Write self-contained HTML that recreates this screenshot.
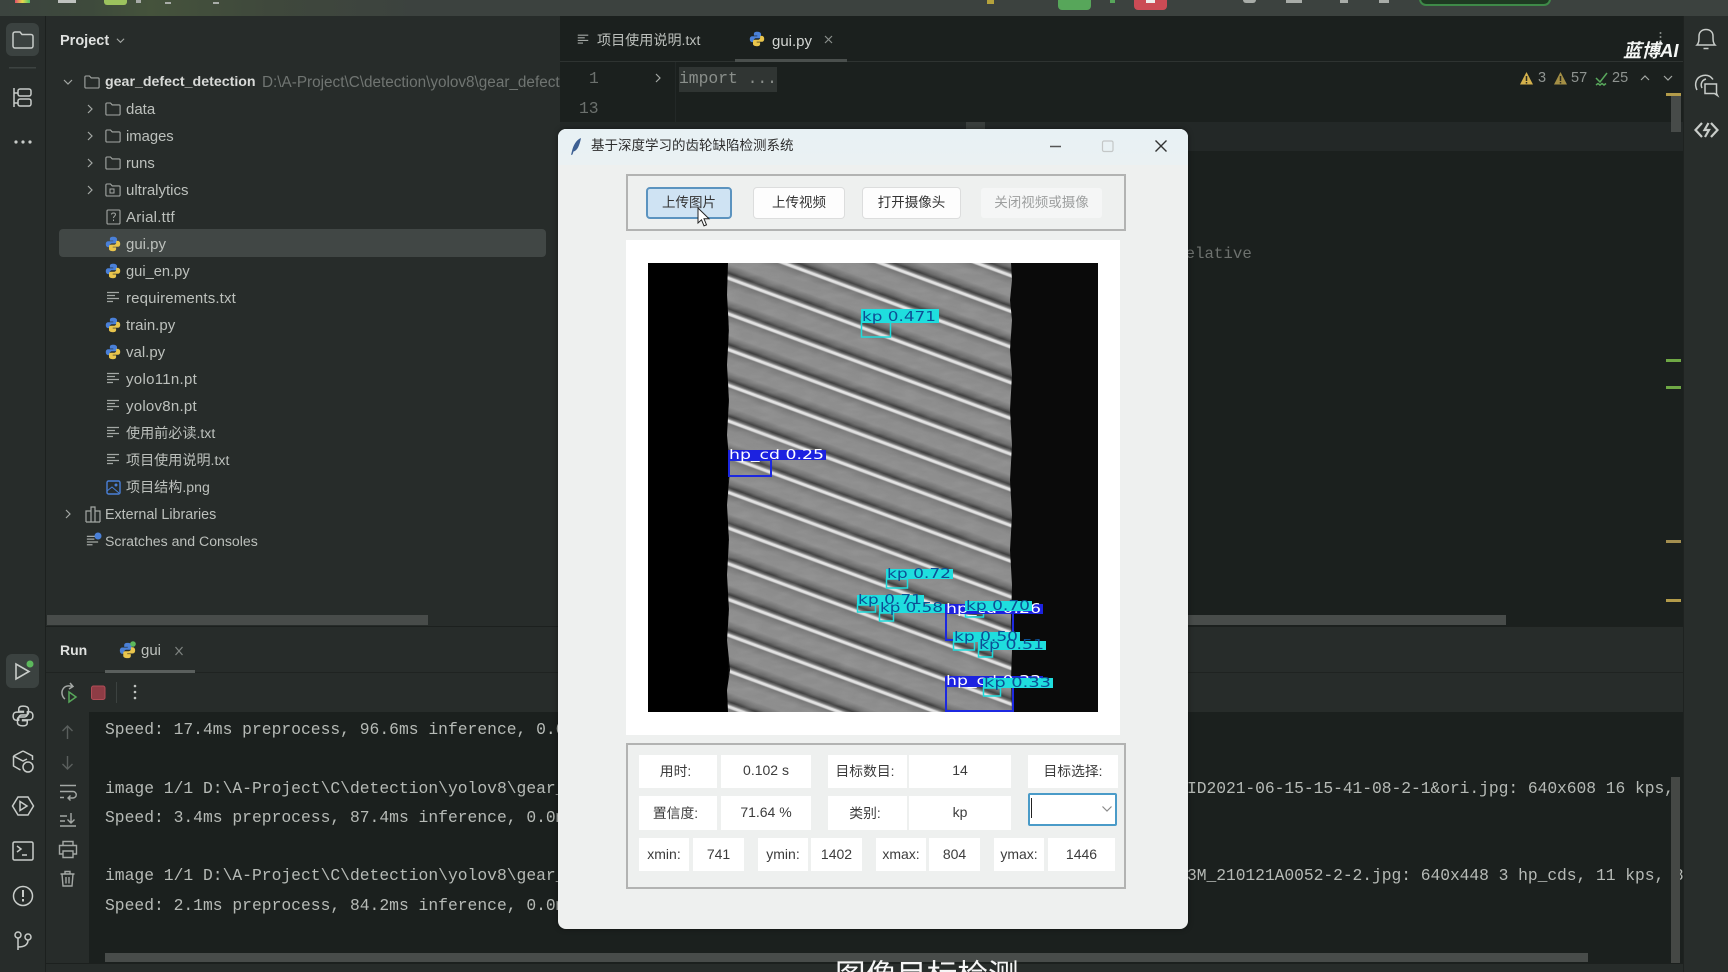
<!DOCTYPE html>
<html lang="zh">
<head>
<meta charset="utf-8">
<title>gear_defect_detection</title>
<style>
html,body{margin:0;padding:0;width:1728px;height:972px;overflow:hidden;background:#1b201e}
body{position:relative;font-family:"Liberation Sans","Noto Sans CJK SC",sans-serif;color:#bcc0bc;filter:blur(.35px)}
.a{position:absolute}
.topbar{left:0;top:0;width:1728px;height:16px;background:linear-gradient(90deg,#3c443f 0,#3e4a3c 90px,#45533c 150px,#3f483c 270px,#3c423f 420px,#3c423f 100%)}
.lt{left:0;top:16px;width:45px;height:956px;background:#272c2a;border-right:1px solid #1c201e}
.pp{left:46px;top:16px;width:514px;height:610px;background:#272c2a}
.r{position:absolute;height:27px;line-height:27px;font-size:15px;color:#bcc0bc;white-space:nowrap}
.cj{font-size:14.1px}
.sel{left:59px;top:229px;width:487px;height:28px;background:#414745;border-radius:4px}
.sb{background:#484c4a}
.rp{left:46px;top:626px;width:1637px;height:86px;background:#272c2a;border-top:1px solid #1c201e;box-sizing:border-box}
.gut{left:46px;top:712px;width:43px;height:251px;background:#272c2a}
.con{left:89px;top:712px;width:1594px;height:251px;background:#1b201e;overflow:hidden}
.m{position:absolute;font-family:"Liberation Mono",monospace;font-size:16.33px;line-height:20px;color:#b6bab6;white-space:pre}
.rs{left:1683px;top:16px;width:45px;height:956px;background:#282d2b;border-left:1px solid #1e2220;box-sizing:border-box}
.dlg{left:558px;top:129px;width:630px;height:800px;background:#eef0ef;border-radius:8px;overflow:hidden;box-shadow:0 0 6px rgba(0,0,0,.4)}
.tb{position:absolute;left:0;top:0;width:630px;height:36px;background:linear-gradient(180deg,#e8f1f4,#eaf1f3)}
.t{position:absolute;font-size:13.5px;color:#2c2c2c;white-space:nowrap}
.btn{position:absolute;box-sizing:border-box;display:flex;align-items:center;justify-content:center;font-size:13.5px;color:#333;background:#fdfdfd;border-radius:3px;box-shadow:0 0 0 1px #dcdddd;padding-bottom:4px}
.c{position:absolute;box-sizing:border-box;background:#fff;display:flex;align-items:center;justify-content:center;font-size:14px;color:#3c3c3c;white-space:nowrap;padding-bottom:2px}
.l{font-size:13.8px;padding-right:5px}
.g{position:absolute;box-sizing:border-box;border:2px solid #b2b3b2}
</style>
</head>
<body>

<svg width="0" height="0" style="position:absolute">
<defs>
<symbol id="py" viewBox="0 0 16 16">
<path fill="#4a80d8" d="M8 .8C5.4.8 4.9 1.9 4.9 3v1.600h3.400v.6H3.200C1.700 5.200.8 6.300.8 8.100s.9 3 2.400 3h1.600V9.400c0-1.200 1-2.100 2.100-2.100h3.400c1 0 1.700-.8 1.700-1.700V3C11.900 1.800 10.600.8 8 .8z"/>
<path fill="#e9c54c" d="M8 15.200c2.600 0 3.100-1.100 3.100-2.200v-1.600H7.700v-.6h5.100c1.500 0 2.400-1.100 2.400-2.900s-.9-3-2.400-3h-1.600v1.700c0 1.200-1 2.100-2.100 2.100H5.700C4.700 8.700 4 9.500 4 10.400V13c0 1.200 1.400 2.200 4 2.200z"/>
</symbol>
<symbol id="fd" viewBox="0 0 16 16"><path fill="none" stroke="#a4a8a5" stroke-width="1.100" d="M.9 3a1 1 0 0 1 1-1h3.600l1.700 1.900h6.900a1 1 0 0 1 1 1V13a1 1 0 0 1-1 1H1.900a1 1 0 0 1-1-1z"/></symbol>
<symbol id="tx" viewBox="0 0 16 16"><path fill="none" stroke="#a4a8a5" stroke-width="1.300" d="M2 2.500h12M2 5.500h8M2 8.500h12M2 11.500h6"/></symbol>
<symbol id="cr" viewBox="0 0 10 10"><path fill="none" stroke="#a4a8a5" stroke-width="1.200" d="M3 1l4 4-4 4"/></symbol>
<symbol id="cd" viewBox="0 0 10 10"><path fill="none" stroke="#a4a8a5" stroke-width="1.200" d="M1 3l4 4 4-4"/></symbol>
<pattern id="teeth" patternUnits="userSpaceOnUse" width="100" height="33.48" patternTransform="translate(728 277) rotate(20.3)">
<rect width="100" height="33.48" fill="url(#tg)"/>
</pattern>
<linearGradient id="tg" x1="0" y1="0" x2="0" y2="1">
<stop offset="0" stop-color="#e6e6e6"/>
<stop offset=".06" stop-color="#e2e2e2"/>
<stop offset=".1" stop-color="#777"/>
<stop offset=".3" stop-color="#8c8c8c"/>
<stop offset=".62" stop-color="#8e8e8e"/>
<stop offset=".8" stop-color="#6a6a6a"/>
<stop offset=".89" stop-color="#3e3e3e"/>
<stop offset=".95" stop-color="#6e6e6e"/>
<stop offset="1" stop-color="#cfcfcf"/>
</linearGradient>
<filter id="nz" x="0" y="0" width="100%" height="100%">
<feTurbulence type="fractalNoise" baseFrequency=".05 .16" numOctaves="2" seed="4"/>
<feColorMatrix type="matrix" values="0 0 0 0 .5 0 0 0 0 .5 0 0 0 0 .5 1.600 0 0 0 -.55"/>
<feComposite in2="SourceGraphic" operator="in"/>
</filter>
</defs>
</svg>

<!-- top bar -->
<div class="a topbar"></div>
<div class="a" style="left:15px;top:0;width:15px;height:3px;background:linear-gradient(90deg,#e24f6c,#e8d84a,#4ac36b)"></div>
<div class="a" style="left:58px;top:0;width:18px;height:3px;background:#bfc2bf"></div>
<div class="a" style="left:104px;top:0;width:23px;height:5px;background:#9cc25e;border-radius:0 0 3px 3px"></div>
<div class="a" style="left:136px;top:0;width:5px;height:3px;background:#a8aca8"></div>
<div class="a" style="left:165px;top:2px;width:6px;height:2px;background:#a8aca8"></div>
<div class="a" style="left:213px;top:2px;width:6px;height:2px;background:#a8aca8"></div>
<div class="a" style="left:987px;top:0;width:7px;height:4px;background:#b5a23c"></div>
<div class="a" style="left:1058px;top:0;width:33px;height:10px;background:#57a65a;border-radius:0 0 4px 4px"></div>
<div class="a" style="left:1110px;top:0;width:5px;height:3px;background:#57a65a"></div>
<div class="a" style="left:1134px;top:0;width:33px;height:10px;background:#cb4b55;border-radius:0 0 4px 4px"></div>
<div class="a" style="left:1146px;top:0;width:9px;height:3px;background:#eee"></div>
<div class="a" style="left:1243px;top:0;width:13px;height:3px;background:#a8aca8;border-radius:0 0 6px 6px"></div>
<div class="a" style="left:1286px;top:0;width:16px;height:3px;background:#a8aca8"></div>
<div class="a" style="left:1340px;top:0;width:8px;height:3px;background:#a8aca8"></div>
<div class="a" style="left:1379px;top:0;width:10px;height:3px;background:#a8aca8"></div>
<div class="a" style="left:1419px;top:-8px;width:132px;height:14px;box-sizing:border-box;background:#1e3a22;border:2px solid #3e8a48;border-radius:8px"></div>

<!-- left toolbar + panels -->
<div class="a lt"></div>
<div class="a pp"></div>
<div class="a sel"></div>

<div class="r" style="left:60px;top:28px;font-weight:bold;font-size:14.5px;color:#dfe1df">Project</div>
<div class="r" style="left:105px;top:69px;font-weight:bold;font-size:14.2px;color:#d8dad8">gear_defect_detection</div>
<div class="r" style="left:262px;top:69px;color:#707572;font-size:15.3px">D:\A-Project\C\detection\yolov8\gear_defect</div>
<div class="r" style="left:126px;top:96px">data</div>
<div class="r" style="left:126px;top:124px;font-size:14.8px">images</div>
<div class="r" style="left:126px;top:151px;font-size:14.8px">runs</div>
<div class="r" style="left:126px;top:177px">ultralytics</div>
<div class="r" style="left:126px;top:204px;letter-spacing:.25px">Arial.ttf</div>
<div class="r" style="left:126px;top:231px">gui.py</div>
<div class="r" style="left:126px;top:259px;font-size:14.7px">gui_en.py</div>
<div class="r" style="left:126px;top:285px;letter-spacing:.15px">requirements.txt</div>
<div class="r" style="left:126px;top:312px">train.py</div>
<div class="r" style="left:126px;top:339px">val.py</div>
<div class="r" style="left:126px;top:366px;letter-spacing:.3px">yolo11n.pt</div>
<div class="r" style="left:126px;top:393px;letter-spacing:.25px">yolov8n.pt</div>
<div class="r cj" style="left:126px;top:420px">使用前必读.txt</div>
<div class="r cj" style="left:126px;top:447px">项目使用说明.txt</div>
<div class="r cj" style="left:126px;top:474px">项目结构.png</div>
<div class="r" style="left:105px;top:502px;font-size:14.3px">External Libraries</div>
<div class="r" style="left:105px;top:528px;font-size:14.1px">Scratches and Consoles</div>

<div class="a sb" style="left:47px;top:615px;width:381px;height:10px"></div>

<!-- editor -->
<div class="a" style="left:560px;top:61px;width:1123px;height:1px;background:#2e3331"></div>
<div class="a" style="left:560px;top:122px;width:1123px;height:29px;background:#232827"></div>
<div class="a" style="left:966px;top:122px;width:19px;height:7px;background:#3a3f3d"></div>
<div class="a" style="left:675px;top:62px;width:1px;height:553px;background:#232827"></div>
<div class="r" style="left:597px;top:27px;font-size:14.1px">项目使用说明.txt</div>
<div class="r" style="left:772px;top:28px;font-size:15px;color:#d2d5d2">gui.py</div>
<div class="a" style="left:735px;top:59px;width:112px;height:3px;background:#4a4f4d"></div>
<div class="a" style="left:679px;top:67px;width:98px;height:25px;background:#303533"></div>
<div class="m" style="left:679px;top:69px;color:#8a8f8b">import ...</div>
<div class="m" style="left:589px;top:69px;color:#6b706d">1</div>
<div class="m" style="left:579px;top:99px;color:#6b706d">13</div>
<div class="m" style="left:1176px;top:244px;color:#6d716e;font-size:15.8px">relative</div>

<div class="r" style="left:1538px;top:65px;font-size:14.5px;color:#8f9491">3</div>
<div class="r" style="left:1571px;top:65px;font-size:14.5px;color:#8f9491">57</div>
<div class="r" style="left:1612px;top:65px;font-size:14.5px;color:#8f9491">25</div>

<div class="a" style="left:1671px;top:95px;width:10px;height:37px;background:#474b49"></div>
<div class="a" style="left:1666px;top:93px;width:15px;height:3px;background:#b39b4a"></div>
<div class="a" style="left:1666px;top:359px;width:15px;height:3px;background:#6fa845"></div>
<div class="a" style="left:1666px;top:386px;width:15px;height:3px;background:#6fa845"></div>
<div class="a" style="left:1666px;top:540px;width:15px;height:3px;background:#a48f50"></div>
<div class="a" style="left:1666px;top:599px;width:15px;height:3px;background:#b39b4a"></div>
<div class="a sb" style="left:1100px;top:615px;width:406px;height:10px"></div>

<!-- run panel -->
<div class="a rp"></div>
<div class="a" style="left:46px;top:672px;width:1637px;height:1px;background:#1f2321"></div>
<div class="r" style="left:60px;top:637px;font-weight:bold;font-size:14px;color:#dfe1df">Run</div>
<div class="r" style="left:141px;top:637px">gui</div>
<div class="a" style="left:105px;top:670px;width:90px;height:3px;background:#5a5f5d"></div>
<div class="a gut"></div>
<div class="a con">
<div class="m" style="left:16px;top:8px">Speed: 17.4ms preprocess, 96.6ms inference, 0.0ms postprocess</div>
<div class="m" style="left:16px;top:67px">image 1/1 D:\A-Project\C\detection\yolov8\gear_defect</div>
<div class="m" style="left:16px;top:96px">Speed: 3.4ms preprocess, 87.4ms inference, 0.0ms postprocess</div>
<div class="m" style="left:16px;top:154px">image 1/1 D:\A-Project\C\detection\yolov8\gear_defect</div>
<div class="m" style="left:16px;top:184px">Speed: 2.1ms preprocess, 84.2ms inference, 0.0ms postprocess</div>
<div class="m" style="left:1098px;top:67px;letter-spacing:-.06px">ID2021-06-15-15-41-08-2-1&amp;ori.jpg: 640x608 16 kps,</div>
<div class="m" style="left:1098px;top:154px;letter-spacing:-.06px">3M_210121A0052-2-2.jpg: 640x448 3 hp_cds, 11 kps, 8</div>
</div>
<div class="a" style="left:1671px;top:777px;width:9px;height:186px;background:#454845"></div>
<div class="a sb" style="left:105px;top:953px;width:1483px;height:9px"></div>
<div class="a" style="left:46px;top:963px;width:1637px;height:9px;background:#272c2a;border-top:1px solid #1c201e;box-sizing:border-box"></div>
<div class="a rs"></div>

<!-- IDE icons -->
<svg class="a" style="left:0;top:0" width="1728" height="972" viewBox="0 0 1728 972">
<rect x="6" y="23" width="33" height="33" rx="6" fill="#3b4240"/>
<path fill="none" stroke="#c8ccc9" stroke-width="1.500" d="M13 34a2 2 0 0 1 2-2h5l2 2.500h9a2 2 0 0 1 2 2V46a2 2 0 0 1-2 2H15a2 2 0 0 1-2-2z"/>
<rect x="9" y="67" width="27" height="1.500" fill="#3d4341"/>
<path fill="none" stroke="#c8ccc9" stroke-width="1.500" d="M14 88v19M14 93h4M14 103h4"/><rect x="18" y="89" width="13" height="7" rx="2" fill="none" stroke="#c8ccc9" stroke-width="1.500"/><rect x="18" y="99" width="13" height="7" rx="2" fill="none" stroke="#c8ccc9" stroke-width="1.500"/>
<circle cx="16" cy="142" r="1.600" fill="#c8ccc9"/><circle cx="23" cy="142" r="1.600" fill="#c8ccc9"/><circle cx="30" cy="142" r="1.600" fill="#c8ccc9"/>
<rect x="6" y="654" width="33" height="34" rx="6" fill="#3b4240"/>
<path fill="none" stroke="#c8ccc9" stroke-width="1.600" d="M16 664v15l13-7.500z"/><circle cx="30" cy="664" r="3.500" fill="#5cb85c"/>
<g transform="translate(12 705) scale(1.375)" fill="none" stroke="#c8ccc9" stroke-width="1.100">
<path d="M8 .8C5.400.8 4.900 1.900 4.900 3v1.600h3.400v.6H3.200C1.700 5.200.8 6.300.8 8.100s.9 3 2.400 3h1.600V9.400c0-1.200 1-2.100 2.100-2.100h3.400c1 0 1.700-.8 1.700-1.700V3C11.900 1.800 10.600.8 8 .8z"/>
<path d="M8 15.200c2.600 0 3.100-1.100 3.100-2.200v-1.600H7.700v-.6h5.100c1.500 0 2.400-1.100 2.400-2.900s-.9-3-2.400-3h-1.600v1.700c0 1.200-1 2.100-2.100 2.100H5.700C4.700 8.700 4 9.500 4 10.400V13c0 1.200 1.400 2.200 4 2.200z"/>
</g>
<path fill="none" stroke="#c8ccc9" stroke-width="1.500" d="M23 751l9.500 5v4M13.500 756l9.500-5M13.500 756v10l7 4M13.500 756l9.500 5 4-2"/><circle cx="28" cy="767" r="5" fill="none" stroke="#c8ccc9" stroke-width="1.500"/>
<path fill="none" stroke="#c8ccc9" stroke-width="1.500" d="M18 797h10l5.500 9-5.500 9H18l-5.500-9z"/><path fill="none" stroke="#c8ccc9" stroke-width="1.500" d="M20 801.500v9l7-4.500z"/>
<rect x="13" y="842" width="20" height="18" rx="1.500" fill="none" stroke="#c8ccc9" stroke-width="1.500"/><path fill="none" stroke="#c8ccc9" stroke-width="1.500" d="M17 846l4 3-4 3M22 855h5"/>
<circle cx="23" cy="896" r="9.500" fill="none" stroke="#c8ccc9" stroke-width="1.500"/><path stroke="#c8ccc9" stroke-width="2" d="M23 890v7M23 899v2.500"/>
<circle cx="18" cy="935" r="3" fill="none" stroke="#c8ccc9" stroke-width="1.500"/><circle cx="28" cy="937" r="3" fill="none" stroke="#c8ccc9" stroke-width="1.500"/><path fill="none" stroke="#c8ccc9" stroke-width="1.500" d="M18 938v12M18 947c6 0 10-2 10-7"/>

<use href="#cd" x="63" y="77" width="10" height="10"/>
<use href="#cr" x="85" y="104" width="10" height="10"/>
<use href="#cr" x="85" y="131" width="10" height="10"/>
<use href="#cr" x="85" y="158" width="10" height="10"/>
<use href="#cr" x="85" y="185" width="10" height="10"/>
<use href="#cr" x="63" y="509" width="10" height="10"/>
<use href="#cd" x="116" y="36" width="9" height="9"/>
<use href="#fd" x="84" y="74" width="16" height="16"/>
<use href="#fd" x="105" y="101" width="16" height="16"/>
<use href="#fd" x="105" y="128" width="16" height="16"/>
<use href="#fd" x="105" y="155" width="16" height="16"/>
<use href="#fd" x="105" y="182" width="16" height="16"/>
<rect x="110" y="189" width="4" height="4" fill="none" stroke="#a4a8a5"/>
<rect x="107" y="210" width="13" height="14" rx="1" fill="none" stroke="#a4a8a5" stroke-width="1.100"/>
<path fill="none" stroke="#a4a8a5" d="M111.500 214.500c0-2 4-2 4 0 0 1.500-2 1.500-2 3.500M113.500 219.500v1.500"/>
<use href="#py" x="105" y="236" width="16" height="16"/>
<use href="#py" x="105" y="263" width="16" height="16"/>
<use href="#tx" x="105" y="290" width="16" height="16"/>
<use href="#py" x="105" y="317" width="16" height="16"/>
<use href="#py" x="105" y="344" width="16" height="16"/>
<use href="#tx" x="105" y="371" width="16" height="16"/>
<use href="#tx" x="105" y="398" width="16" height="16"/>
<use href="#tx" x="105" y="425" width="16" height="16"/>
<use href="#tx" x="105" y="452" width="16" height="16"/>
<rect x="107" y="481" width="13" height="13" rx="1.500" fill="none" stroke="#4a80d8" stroke-width="1.400"/><path fill="none" stroke="#4a80d8" d="M107 491l5-4 7 6"/><circle cx="116" cy="485" r="1.500" fill="#4a80d8"/>
<path fill="none" stroke="#a4a8a5" stroke-width="1.200" d="M86 522v-11h5v11M91 522v-15h4v15M95 522v-11h5v11M86 522h14"/>
<use href="#tx" x="85" y="534" width="15" height="15"/><circle cx="98" cy="536" r="3.500" fill="#4a80d8"/>

<use href="#tx" x="576" y="33" width="14" height="14"/>
<use href="#py" x="749" y="31" width="16" height="16"/>
<path stroke="#8a8f8c" stroke-width="1.200" d="M825 36l7 7M832 36l-7 7"/>
<use href="#cr" x="653" y="73" width="10" height="10"/>

<!-- inspection -->
<path fill="#d4b14c" d="M1526.500 72l6.500 12.500h-13z"/><path stroke="#2a2a20" stroke-width="1.500" d="M1526.500 76v5M1526.500 82v1.500"/>
<path fill="#a48f45" d="M1560.500 72l6.500 12.500h-13z"/><path stroke="#2a2a20" stroke-width="1.500" d="M1560.500 76v5M1560.500 82v1.500"/>
<path fill="none" stroke="#59a85c" stroke-width="1.500" d="M1596 78l4 4 7-9M1596 85l2-1.500 2 1.500 2-1.500 2 1.500 2-1.500"/>
<use href="#cd" x="1640" y="73" width="10" height="10" transform="rotate(180 1645 78)"/>
<use href="#cd" x="1663" y="73" width="10" height="10"/>
<circle cx="1660.500" cy="33" r="1" fill="#8a8f8c"/><circle cx="1660.500" cy="37" r="1" fill="#8a8f8c"/><circle cx="1660.500" cy="41" r="1" fill="#8a8f8c"/>

<!-- right toolbar -->
<path fill="none" stroke="#c8ccc9" stroke-width="1.500" d="M1697 45c2-2 2-5 2-9 0-4 3-6.500 7-6.500s7 2.500 7 6.500c0 4 0 7 2 9zM1703.500 48.500h5"/>
<path fill="none" stroke="#c8ccc9" stroke-width="1.500" d="M1697 90c-3-6-1-13 6-14.500 5-1 8 1 10 4M1702 88c-2-4 0-8 4-9M1705 84h11.500v9.500l1 2-3-2H1705z"/>
<path fill="none" stroke="#c8ccc9" stroke-width="2.200" d="M1702 123l-6.500 7 6.500 7M1711 123l6.500 7-6.500 7M1708.500 123l-4 7h4.500l-4 7"/>

<!-- run toolbar -->
<use href="#py" x="119" y="642" width="17" height="17"/><circle cx="133" cy="644" r="2.800" fill="#5cb85c"/>
<path stroke="#7f8481" stroke-width="1.200" d="M175.500 647l7 8M182.500 647l-7 8"/>
<path fill="none" stroke="#a4a8a5" stroke-width="1.500" d="M73 687c-3-2-8-1.500-10 2-2 3-1 8 2 10M70 683l3 3.500-4 2.500"/><path fill="none" stroke="#57a65a" stroke-width="1.500" d="M69 692v10l7-5z"/>
<rect x="91.500" y="686" width="13.500" height="13.500" rx="2" fill="#8e3c45" stroke="#b14d57" stroke-width="1"/>
<rect x="116" y="682" width="1" height="21" fill="#3c4240"/>
<circle cx="135" cy="686" r="1.300" fill="#c0c4c1"/><circle cx="135" cy="692" r="1.300" fill="#c0c4c1"/><circle cx="135" cy="698" r="1.300" fill="#c0c4c1"/>

<path fill="none" stroke="#5a5f5d" stroke-width="1.400" d="M67.500 739v-13M62.500 731l5-5 5 5M67.500 756v13M62.500 764l5 5 5-5"/>
<path fill="none" stroke="#a4a8a5" stroke-width="1.400" d="M60 785.500h16M60 791.500h13a3 3 0 0 1 0 6.500h-5M70.500 795.500l-2.500 2.500 2.500 2.500M60 797.500h4"/>
<path fill="none" stroke="#a4a8a5" stroke-width="1.400" d="M60 816h7M60 821h5M60 826h16M71 813v10M67.500 819.500l3.500 3.500 3.500-3.500"/>
<path fill="none" stroke="#a4a8a5" stroke-width="1.400" d="M63 846v-4.500h10v4.500M63 854h-3.500v-8.500h17v8.500H73M63 851h10v6.500H63z"/>
<path fill="none" stroke="#a4a8a5" stroke-width="1.400" d="M60.500 874h14M65 874v-2.500h5v2.500M62 874l1 12h9l1-12M66 877v6.500M69 877v6.500"/>
</svg>

<div class="a" style="left:1623px;top:38px;font-size:18.5px;font-style:italic;font-weight:bold;color:#f4f6f4;white-space:nowrap;line-height:26px;font-family:'Liberation Sans','Noto Sans CJK SC',sans-serif">蓝博AI</div>

<!-- subtitle -->
<div class="a" style="left:835px;top:958px;font-size:30.6px;line-height:36px;color:#f6f6f6;white-space:nowrap;font-family:'Liberation Sans','Noto Sans CJK SC',sans-serif">图像目标检测</div>

<!-- dialog -->
<div class="a dlg">
<div class="tb"></div>
<svg class="a" style="left:0;top:0" width="630" height="40" viewBox="558 129 630 40">
<path fill="#3d5f92" d="M581 138c-5 2-8 8-9 13l-1 4 1.500-.5 1-3c4-1 6-6 7.500-13.500z"/>
<path stroke="#555" stroke-width="1.600" d="M1050 146.500h11"/>
<rect x="1102.500" y="141" width="10.500" height="10.500" rx="1.500" fill="none" stroke="#c4c7c7" stroke-width="1.200"/>
<path stroke="#333" stroke-width="1.400" d="M1155.500 140.500l11 11M1166.500 140.500l-11 11"/>
</svg>
<div class="t" style="left:33px;top:8px;line-height:18px">基于深度学习的齿轮缺陷检测系统</div>

<div class="g" style="left:68px;top:45px;width:500px;height:57px"></div>
<div class="btn" style="left:88px;top:58px;width:86px;height:32px;background:#cfe3f3;box-shadow:none;border:2px solid #5b93bf;border-radius:4px">上传图片</div>
<div class="btn" style="left:196px;top:59px;width:90px;height:30px">上传视频</div>
<div class="btn" style="left:305px;top:59px;width:97px;height:30px">打开摄像头</div>
<div class="btn" style="left:423px;top:59px;width:121px;height:30px;background:#f5f6f6;box-shadow:none;color:#9d9f9f">关闭视频或摄像</div>

<div class="a" style="left:68px;top:111px;width:494px;height:495px;background:#fff"></div>

<svg class="a" style="left:90px;top:134px" width="450" height="449" viewBox="648 263 450 449" font-family="'DejaVu Sans',sans-serif" font-size="13">
<rect x="648" y="263" width="450" height="449" fill="#000"/>
<rect x="1010" y="263" width="88" height="449" fill="#0a0a0a"/>
<path fill="url(#teeth)" d="M728 263L1011 263 1012 280 1010 300 1012 320 1010 350 1012 375 1010 410 1012 445 1010 480 1012 515 1010 550 1012 585 1011 620 1012 650 1011 680 1012 712H728L727 690 730 670 727 640 729 610 727 575 729 540 727 505 730 470 727 435 729 400 727 365 729 330 727 295z"/>
<path fill="#808080" filter="url(#nz)" opacity=".18" d="M728 263H1010V712H728z"/>
<g fill="none" stroke="#1ddcdc" stroke-width="1.500">
<rect x="861.500" y="319" width="29" height="18"/>
<rect x="886.500" y="579" width="21" height="9"/>
<rect x="857.500" y="605" width="18" height="7"/>
<rect x="879.500" y="613" width="14" height="8"/>
<rect x="965.500" y="611" width="18" height="6"/>
<rect x="953.500" y="642" width="21" height="8"/>
<rect x="978.500" y="650" width="14" height="7"/>
<rect x="983.500" y="688" width="17" height="8"/>
</g>
<g fill="none" stroke="#1c28e0" stroke-width="2">
<rect x="729" y="460" width="42" height="16"/>
<path d="M946 604v36h8M1013 604v35"/>
<rect x="946" y="686" width="67" height="25"/>
</g>
<g fill="#1c22e0">
<rect x="728" y="450" width="98" height="10"/>
<rect x="945" y="604" width="98" height="10"/>
<rect x="945" y="676" width="98" height="10"/>
</g>
<g fill="#fff">
<text x="729" y="459" textLength="95" lengthAdjust="spacingAndGlyphs">hp_cd 0.25</text>
<text x="946" y="613" textLength="95" lengthAdjust="spacingAndGlyphs">hp_cd 0.26</text>
<text x="946" y="685" textLength="95" lengthAdjust="spacingAndGlyphs">hp_cd 0.33</text>
</g>
<g fill="#1fdede">
<rect x="861" y="309" width="78" height="14"/>
<rect x="886" y="569" width="67" height="10"/>
<rect x="857" y="595" width="67" height="10"/>
<rect x="879" y="604" width="66" height="9"/>
<rect x="965" y="601" width="67" height="10"/>
<rect x="953" y="632" width="67" height="10"/>
<rect x="978" y="641" width="68" height="9"/>
<rect x="983" y="678" width="70" height="10"/>
</g>
<g fill="#0d4f94">
<text x="862" y="321" textLength="74" lengthAdjust="spacingAndGlyphs">kp 0.471</text>
<text x="887" y="578" textLength="64" lengthAdjust="spacingAndGlyphs">kp 0.72</text>
<text x="858" y="604" textLength="64" lengthAdjust="spacingAndGlyphs">kp 0.71</text>
<text x="880" y="612" textLength="63" lengthAdjust="spacingAndGlyphs">kp 0.58</text>
<text x="966" y="610" textLength="64" lengthAdjust="spacingAndGlyphs">kp 0.70</text>
<text x="954" y="641" textLength="64" lengthAdjust="spacingAndGlyphs">kp 0.50</text>
<text x="979" y="649" textLength="65" lengthAdjust="spacingAndGlyphs">kp 0.51</text>
<text x="984" y="687" textLength="67" lengthAdjust="spacingAndGlyphs">kp 0.33</text>
</g>
</svg>

<div class="g" style="left:68px;top:614px;width:500px;height:146px"></div>
<!-- row 1 -->
<div class="c l" style="left:81px;top:626px;width:78px;height:33px;padding-bottom:4px">用时:</div>
<div class="c" style="left:163px;top:626px;width:90px;height:33px;padding-bottom:4px">0.102 s</div>
<div class="c l" style="left:270px;top:626px;width:79px;height:33px;padding-bottom:4px">目标数目:</div>
<div class="c" style="left:351px;top:626px;width:102px;height:33px;padding-bottom:3px">14</div>
<div class="c l" style="left:470px;top:626px;width:90px;height:33px;padding-right:0;padding-bottom:4px">目标选择:</div>
<!-- row 2 -->
<div class="c l" style="left:81px;top:667px;width:78px;height:34px">置信度:</div>
<div class="c" style="left:163px;top:667px;width:90px;height:34px">71.64 %</div>
<div class="c l" style="left:270px;top:667px;width:79px;height:34px">类别:</div>
<div class="c" style="left:351px;top:667px;width:102px;height:34px">kp</div>
<div class="a" style="left:470px;top:664px;width:89px;height:33px;box-sizing:border-box;background:#fff;border:2px solid #4a9bc8;border-radius:2px"></div>
<div class="a" style="left:473px;top:669px;width:1px;height:20px;background:#222"></div>
<svg class="a" style="left:543px;top:675px" width="12" height="10" viewBox="0 0 12 10"><path fill="none" stroke="#8a8a8a" stroke-width="1.200" d="M1.500 2.500L6 7l4.500-4.500"/></svg>
<!-- row 3 -->
<div class="c" style="left:81px;top:709px;width:50px;height:33px">xmin:</div>
<div class="c" style="left:135px;top:709px;width:51px;height:33px">741</div>
<div class="c" style="left:200px;top:709px;width:50px;height:33px">ymin:</div>
<div class="c" style="left:253px;top:709px;width:51px;height:33px">1402</div>
<div class="c" style="left:318px;top:709px;width:50px;height:33px">xmax:</div>
<div class="c" style="left:371px;top:709px;width:51px;height:33px">804</div>
<div class="c" style="left:436px;top:709px;width:50px;height:33px">ymax:</div>
<div class="c" style="left:490px;top:709px;width:67px;height:33px">1446</div>

<!-- mouse cursor -->
<svg class="a" style="left:139px;top:78px" width="14" height="22" viewBox="0 0 14 22"><path fill="#fff" stroke="#222" stroke-width="1" d="M1 1v15l3.500-3.200 2.500 6 2.500-1-2.500-6H12z"/></svg>
</div>

</body>
</html>
